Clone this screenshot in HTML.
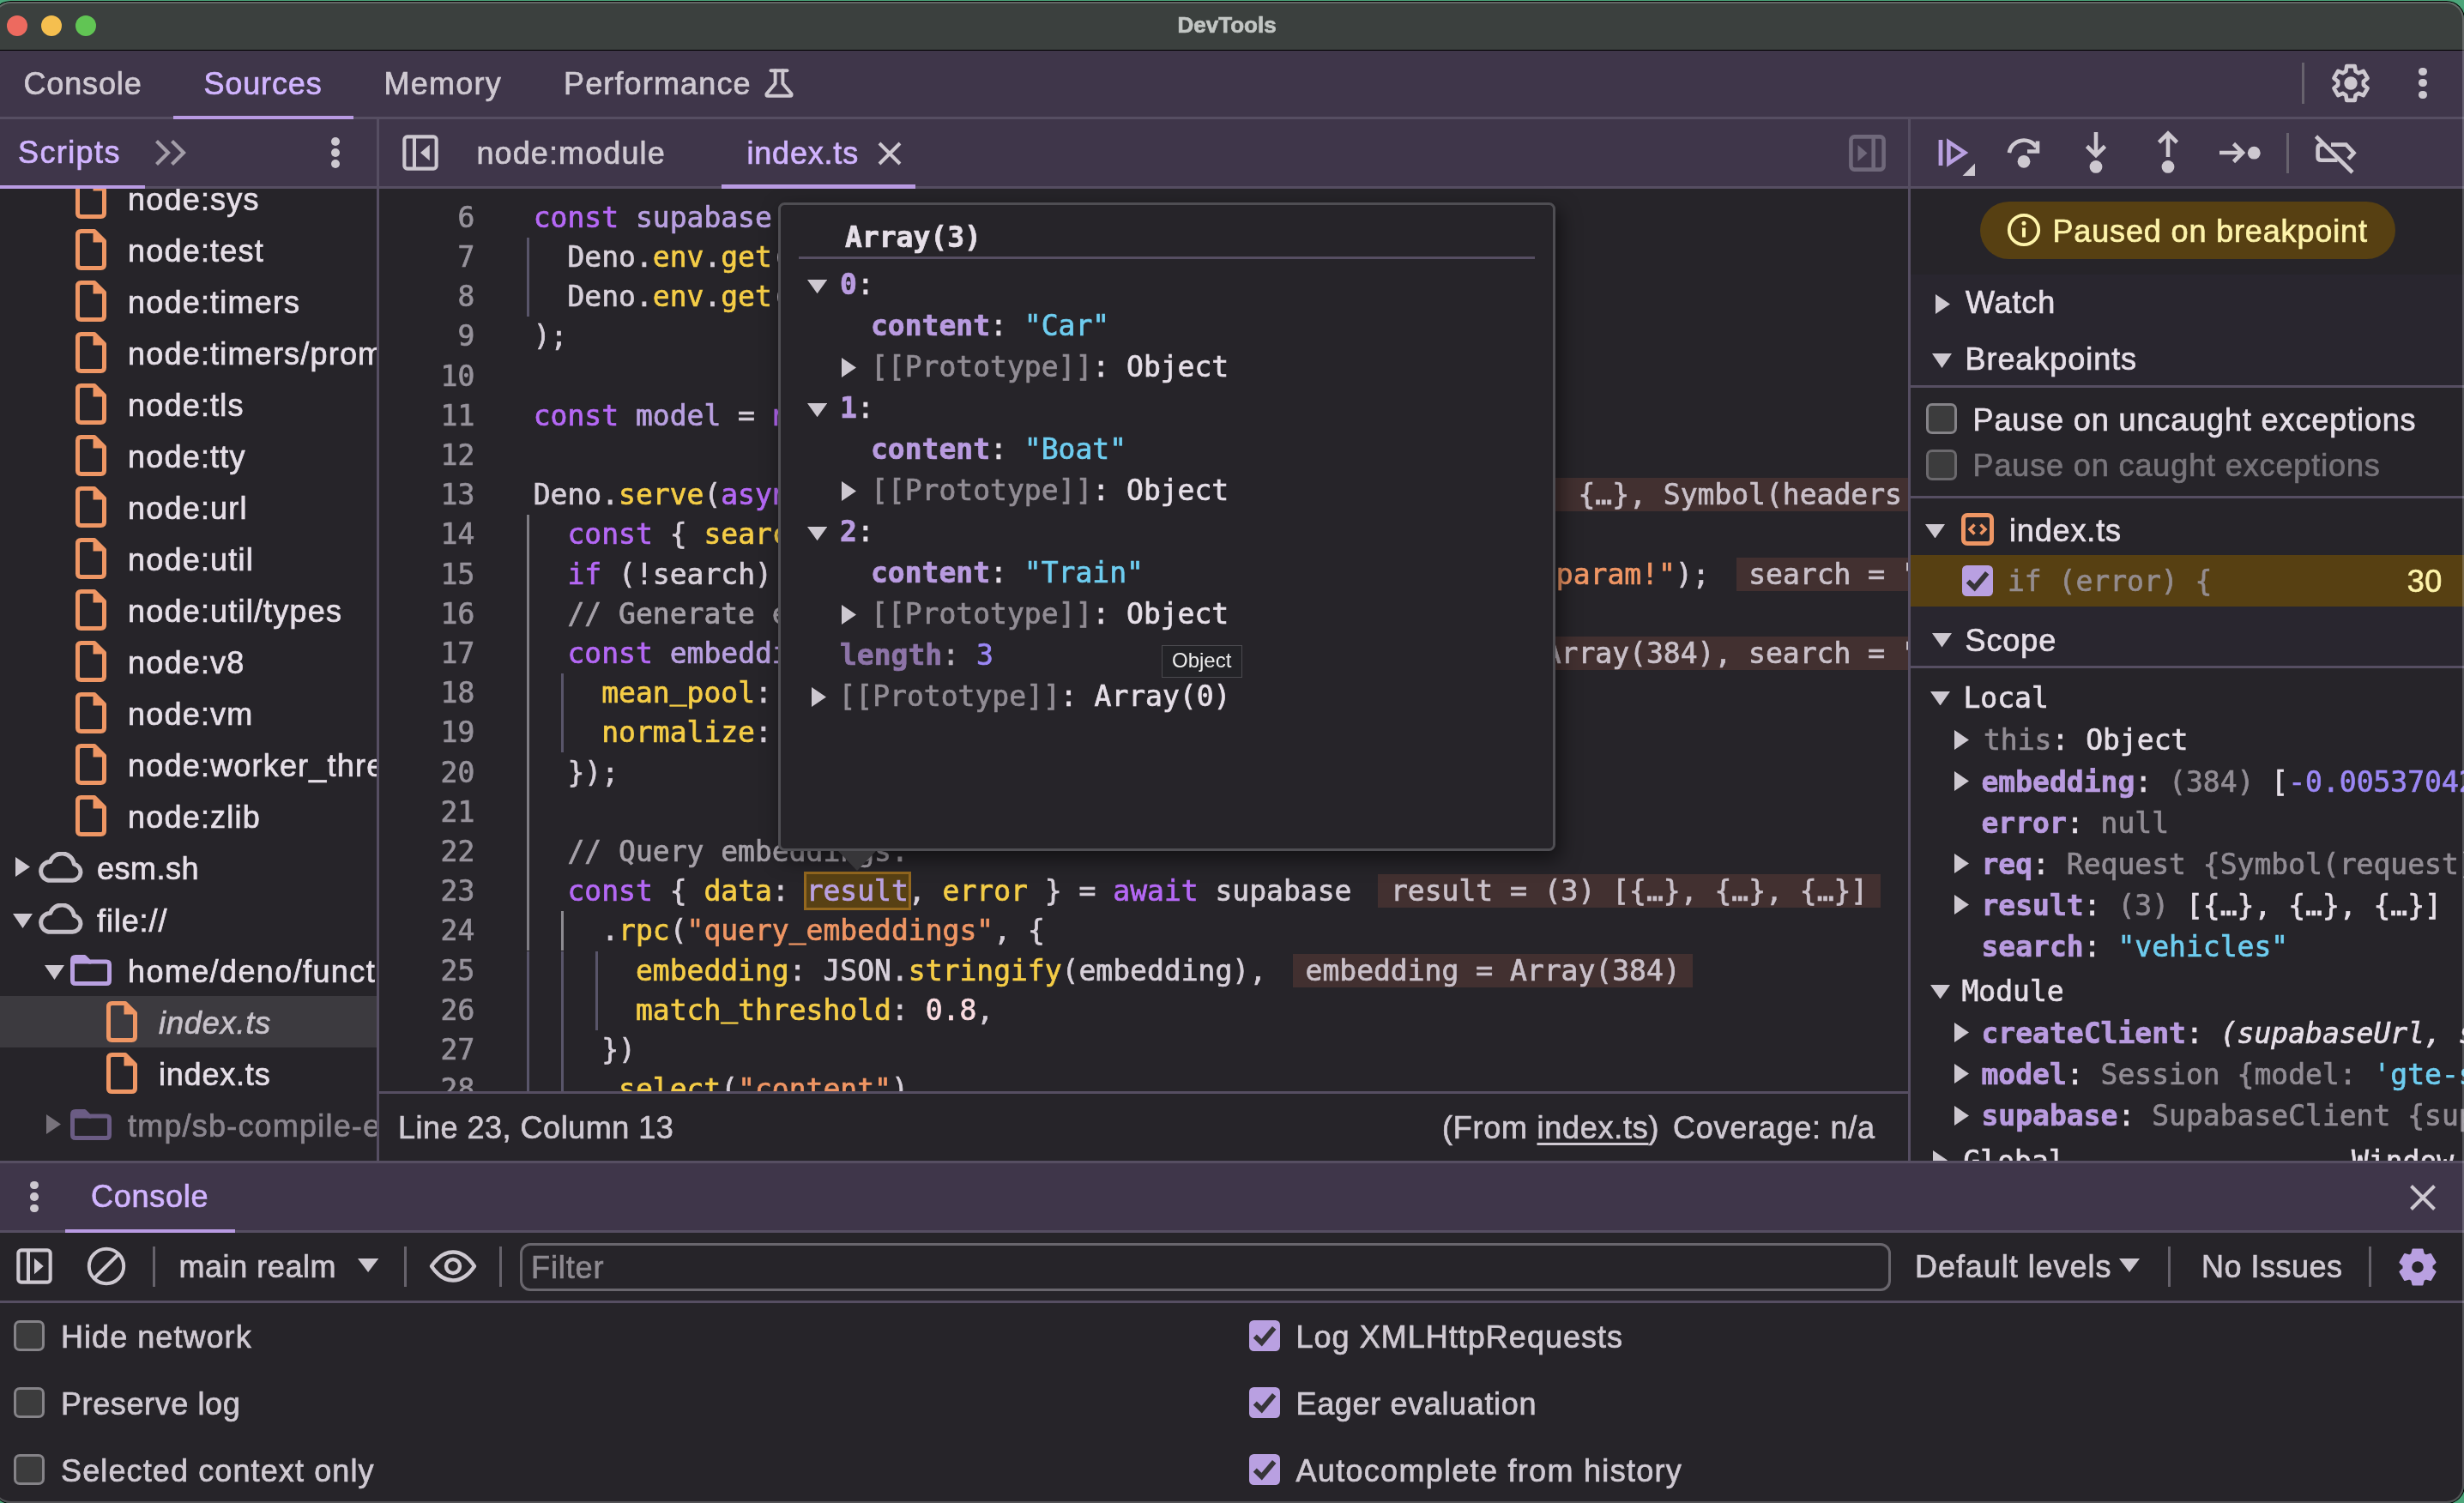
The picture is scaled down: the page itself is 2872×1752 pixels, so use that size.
<!DOCTYPE html>
<html lang="en"><head><meta charset="utf-8"><title>DevTools</title>
<style>
html,body{margin:0;padding:0;background:#3f8f6a;}
body{width:2872px;height:1752px;overflow:hidden;position:relative;}
#w{will-change:transform;position:absolute;left:0;top:0;width:2872px;height:1752px;overflow:hidden;background:#262429;}
.b{position:absolute;display:block;}
.s{position:absolute;font-family:"Liberation Sans", sans-serif;font-size:36px;line-height:48px;height:48px;letter-spacing:0.85px;white-space:pre;color:#e6dfe8;}
.m{position:absolute;font-family:"DejaVu Sans Mono", "Liberation Mono", monospace;font-size:33px;line-height:48px;height:48px;white-space:pre;color:#e6dfe8;}
.clip{position:absolute;overflow:hidden;}
.cl{position:absolute;left:0;font-family:"DejaVu Sans Mono", "Liberation Mono", monospace;font-size:33px;line-height:46.2px;height:46.2px;white-space:pre;color:#d7d0da;}
.k{color:#b568f5}.v{color:#b9a0e1}.p{color:#f5cd46}.t{color:#f09664}.c{color:#a5a0a8}.n{color:#fadce1}
.iv{background:#423030;color:#c9c0c9;margin-left:31px;padding:0 14.5px;}
.nm{color:#b99be0;font-weight:bold}.os{color:#6ecdf0}.dm{color:#918c94}.on{color:#9b87f5}
i{font-style:italic}.u{position:relative;top:-3.8px}
.s,.m,.cl{-webkit-text-stroke:0.7px}
</style></head><body><div id="w">
<div class="b" style="left:0.0px;top:0.0px;width:2872.0px;height:58.0px;background:#3b403e;"></div>
<div class="b" style="left:0.0px;top:57.8px;width:2872.0px;height:1.5px;background:#000;"></div>
<div class="b" style="left:8px;top:18px;width:24px;height:24px;border-radius:50%;background:#ed6a5f;"></div>
<div class="b" style="left:48px;top:18px;width:24px;height:24px;border-radius:50%;background:#f5bf4f;"></div>
<div class="b" style="left:88px;top:18px;width:24px;height:24px;border-radius:50%;background:#61c554;"></div>
<div class="s " style="left:1372.5px;top:4.9px;font-size:26px;letter-spacing:0px;color:#c2c6c4;font-weight:bold;">DevTools</div>
<div class="b" style="left:0.0px;top:59.3px;width:2872.0px;height:76.7px;background:#3f364a;"></div>
<div class="b" style="left:0.0px;top:136.0px;width:2872.0px;height:3.0px;background:#564e62;"></div>
<div class="s " style="left:27.5px;top:73.5px;color:#cfc9d2;">Console</div>
<div class="s " style="left:237.5px;top:73.5px;color:#d1b4ff;">Sources</div>
<div class="s " style="left:447.5px;top:73.5px;letter-spacing:1.25px;color:#cfc9d2;">Memory</div>
<div class="s " style="left:657.0px;top:73.5px;letter-spacing:1.15px;color:#cfc9d2;">Performance</div>
<div class="b" style="left:202.0px;top:134.5px;width:210.0px;height:4.5px;background:#b99be3;"></div>
<svg class="b" style="left:889.0px;top:78.0px;" width="38" height="38" viewBox="0 0 38 38"><g fill="none" stroke="#cdc8d0" stroke-width="3.9" stroke-linecap="round" stroke-linejoin="round"><path d="M9.5,4.3H28.5"/><path d="M14.6,4.3V19.5L4.6,31.2Q3.4,33.7 6.2,33.7H31.8Q34.6,33.7 33.4,31.2L23.4,19.5V4.3"/></g></svg>
<div class="b" style="left:2682.8px;top:73.0px;width:3.2px;height:48.0px;background:#67626d;"></div>
<svg class="b" style="left:2716.0px;top:73.0px;" width="48" height="48" viewBox="0 0 48 48"><path d="M29.62,10.09L28.76,4.16L19.24,4.16L18.38,10.09L14.77,12.18L9.20,9.96L4.44,18.21L9.15,21.91L9.15,26.09L4.44,29.79L9.20,38.04L14.77,35.82L18.38,37.91L19.24,43.84L28.76,43.84L29.62,37.91L33.23,35.82L38.80,38.04L43.56,29.79L38.85,26.09L38.85,21.91L43.56,18.21L38.80,9.96L33.23,12.18Z" fill="none" stroke="#cdc8d0" stroke-width="4.6" stroke-linejoin="round"/><circle cx="24" cy="24" r="7.7" fill="#cdc8d0"/></svg>
<div class="b" style="left:2819.3px;top:78.7px;width:9.4px;height:9.4px;border-radius:50%;background:#cdc8d0"></div>
<div class="b" style="left:2819.3px;top:92.1px;width:9.4px;height:9.4px;border-radius:50%;background:#cdc8d0"></div>
<div class="b" style="left:2819.3px;top:105.6px;width:9.4px;height:9.4px;border-radius:50%;background:#cdc8d0"></div>
<div class="b" style="left:0.0px;top:139.0px;width:2872.0px;height:78.0px;background:#3f364a;"></div>
<div class="b" style="left:0.0px;top:217.0px;width:2872.0px;height:3.0px;background:#564e62;"></div>
<div class="b" style="left:439.0px;top:139.0px;width:3.0px;height:1214.0px;background:#564e62;"></div>
<div class="b" style="left:2224.0px;top:139.0px;width:3.0px;height:1214.0px;background:#564e62;"></div>
<div class="s " style="left:21.0px;top:154.3px;letter-spacing:1.4px;color:#d1b4ff;">Scripts</div>
<div class="b" style="left:0.0px;top:215.5px;width:168.5px;height:4.5px;background:#b99be3;"></div>
<svg class="b" style="left:180.0px;top:162.0px;" width="38" height="32" viewBox="0 0 38 32"><g fill="none" stroke="#a39da8" stroke-width="4.2" stroke-linejoin="miter"><path d="M2.5,2.5L16,16L2.5,29.5"/><path d="M20.5,2.5L34,16L20.5,29.5"/></g></svg>
<div class="b" style="left:385.5px;top:160.0px;width:10px;height:10px;border-radius:50%;background:#cdc8d0"></div>
<div class="b" style="left:385.5px;top:173.0px;width:10px;height:10px;border-radius:50%;background:#cdc8d0"></div>
<div class="b" style="left:385.5px;top:186.0px;width:10px;height:10px;border-radius:50%;background:#cdc8d0"></div>
<svg class="b" style="left:468.5px;top:157.0px;" width="42" height="42" viewBox="0 0 43 43"><rect x="2.4" y="2.4" width="38.2" height="38.2" rx="3.5" fill="none" stroke="#cdc8d0" stroke-width="4.2"/><path d="M14.3,3V40" stroke="#cdc8d0" stroke-width="4.2"/><path d="M32.5,12V31L21.5,21.5Z" fill="#cdc8d0"/></svg>
<div class="s " style="left:555.5px;top:154.8px;letter-spacing:1.1px;color:#cfc9d2;">node:module</div>
<div class="s " style="left:870.5px;top:154.8px;letter-spacing:0.8px;color:#d1b4ff;">index.ts</div>
<svg class="b" style="left:1023.0px;top:165.0px;" width="28" height="28" viewBox="0 0 28 28"><path d="M2,2L26,26M26,2L2,26" stroke="#cdc8d0" stroke-width="4" fill="none"/></svg>
<div class="b" style="left:840.5px;top:214.5px;width:226.0px;height:5.5px;background:#b99be3;"></div>
<svg class="b" style="left:2155.0px;top:156.5px;" width="43" height="43" viewBox="0 0 43 43"><rect x="2.4" y="2.4" width="38.2" height="38.2" rx="4" fill="none" stroke="#6f687a" stroke-width="4.6"/><path d="M28.7,3V40" stroke="#6f687a" stroke-width="4.6"/><path d="M10.5,12V31L21.5,21.5Z" fill="#6f687a"/></svg>
<div class="clip" style="left:0;top:220px;width:439px;height:1132px;">
<svg class="b" style="left:88.0px;top:-13.1px;" width="36" height="48" viewBox="0 0 36 48"><path d="M2.5,6.5Q2.5,2.5 6.5,2.5H22L33.5,14V41.5Q33.5,45.5 29.5,45.5H6.5Q2.5,45.5 2.5,41.5Z" fill="none" stroke="#ee9664" stroke-width="5" stroke-linejoin="round"/><path d="M20.5,2.5L33.5,15.5H20.5Z" fill="#ee9664"/></svg>
<div class="s " style="left:149.0px;top:-10.7px;letter-spacing:1.2px;color:#e6dfe8;">node:sys</div>
<svg class="b" style="left:88.0px;top:46.9px;" width="36" height="48" viewBox="0 0 36 48"><path d="M2.5,6.5Q2.5,2.5 6.5,2.5H22L33.5,14V41.5Q33.5,45.5 29.5,45.5H6.5Q2.5,45.5 2.5,41.5Z" fill="none" stroke="#ee9664" stroke-width="5" stroke-linejoin="round"/><path d="M20.5,2.5L33.5,15.5H20.5Z" fill="#ee9664"/></svg>
<div class="s " style="left:149.0px;top:49.3px;letter-spacing:1.2px;color:#e6dfe8;">node:test</div>
<svg class="b" style="left:88.0px;top:106.9px;" width="36" height="48" viewBox="0 0 36 48"><path d="M2.5,6.5Q2.5,2.5 6.5,2.5H22L33.5,14V41.5Q33.5,45.5 29.5,45.5H6.5Q2.5,45.5 2.5,41.5Z" fill="none" stroke="#ee9664" stroke-width="5" stroke-linejoin="round"/><path d="M20.5,2.5L33.5,15.5H20.5Z" fill="#ee9664"/></svg>
<div class="s " style="left:149.0px;top:109.3px;letter-spacing:1.2px;color:#e6dfe8;">node:timers</div>
<svg class="b" style="left:88.0px;top:166.9px;" width="36" height="48" viewBox="0 0 36 48"><path d="M2.5,6.5Q2.5,2.5 6.5,2.5H22L33.5,14V41.5Q33.5,45.5 29.5,45.5H6.5Q2.5,45.5 2.5,41.5Z" fill="none" stroke="#ee9664" stroke-width="5" stroke-linejoin="round"/><path d="M20.5,2.5L33.5,15.5H20.5Z" fill="#ee9664"/></svg>
<div class="s " style="left:149.0px;top:169.3px;letter-spacing:1.2px;color:#e6dfe8;">node:timers/promises</div>
<svg class="b" style="left:88.0px;top:226.9px;" width="36" height="48" viewBox="0 0 36 48"><path d="M2.5,6.5Q2.5,2.5 6.5,2.5H22L33.5,14V41.5Q33.5,45.5 29.5,45.5H6.5Q2.5,45.5 2.5,41.5Z" fill="none" stroke="#ee9664" stroke-width="5" stroke-linejoin="round"/><path d="M20.5,2.5L33.5,15.5H20.5Z" fill="#ee9664"/></svg>
<div class="s " style="left:149.0px;top:229.3px;letter-spacing:1.2px;color:#e6dfe8;">node:tls</div>
<svg class="b" style="left:88.0px;top:286.9px;" width="36" height="48" viewBox="0 0 36 48"><path d="M2.5,6.5Q2.5,2.5 6.5,2.5H22L33.5,14V41.5Q33.5,45.5 29.5,45.5H6.5Q2.5,45.5 2.5,41.5Z" fill="none" stroke="#ee9664" stroke-width="5" stroke-linejoin="round"/><path d="M20.5,2.5L33.5,15.5H20.5Z" fill="#ee9664"/></svg>
<div class="s " style="left:149.0px;top:289.3px;letter-spacing:1.2px;color:#e6dfe8;">node:tty</div>
<svg class="b" style="left:88.0px;top:347.0px;" width="36" height="48" viewBox="0 0 36 48"><path d="M2.5,6.5Q2.5,2.5 6.5,2.5H22L33.5,14V41.5Q33.5,45.5 29.5,45.5H6.5Q2.5,45.5 2.5,41.5Z" fill="none" stroke="#ee9664" stroke-width="5" stroke-linejoin="round"/><path d="M20.5,2.5L33.5,15.5H20.5Z" fill="#ee9664"/></svg>
<div class="s " style="left:149.0px;top:349.3px;letter-spacing:1.2px;color:#e6dfe8;">node:url</div>
<svg class="b" style="left:88.0px;top:407.0px;" width="36" height="48" viewBox="0 0 36 48"><path d="M2.5,6.5Q2.5,2.5 6.5,2.5H22L33.5,14V41.5Q33.5,45.5 29.5,45.5H6.5Q2.5,45.5 2.5,41.5Z" fill="none" stroke="#ee9664" stroke-width="5" stroke-linejoin="round"/><path d="M20.5,2.5L33.5,15.5H20.5Z" fill="#ee9664"/></svg>
<div class="s " style="left:149.0px;top:409.3px;letter-spacing:1.2px;color:#e6dfe8;">node:util</div>
<svg class="b" style="left:88.0px;top:467.0px;" width="36" height="48" viewBox="0 0 36 48"><path d="M2.5,6.5Q2.5,2.5 6.5,2.5H22L33.5,14V41.5Q33.5,45.5 29.5,45.5H6.5Q2.5,45.5 2.5,41.5Z" fill="none" stroke="#ee9664" stroke-width="5" stroke-linejoin="round"/><path d="M20.5,2.5L33.5,15.5H20.5Z" fill="#ee9664"/></svg>
<div class="s " style="left:149.0px;top:469.3px;letter-spacing:1.2px;color:#e6dfe8;">node:util/types</div>
<svg class="b" style="left:88.0px;top:527.0px;" width="36" height="48" viewBox="0 0 36 48"><path d="M2.5,6.5Q2.5,2.5 6.5,2.5H22L33.5,14V41.5Q33.5,45.5 29.5,45.5H6.5Q2.5,45.5 2.5,41.5Z" fill="none" stroke="#ee9664" stroke-width="5" stroke-linejoin="round"/><path d="M20.5,2.5L33.5,15.5H20.5Z" fill="#ee9664"/></svg>
<div class="s " style="left:149.0px;top:529.3px;letter-spacing:1.2px;color:#e6dfe8;">node:v8</div>
<svg class="b" style="left:88.0px;top:587.0px;" width="36" height="48" viewBox="0 0 36 48"><path d="M2.5,6.5Q2.5,2.5 6.5,2.5H22L33.5,14V41.5Q33.5,45.5 29.5,45.5H6.5Q2.5,45.5 2.5,41.5Z" fill="none" stroke="#ee9664" stroke-width="5" stroke-linejoin="round"/><path d="M20.5,2.5L33.5,15.5H20.5Z" fill="#ee9664"/></svg>
<div class="s " style="left:149.0px;top:589.3px;letter-spacing:1.2px;color:#e6dfe8;">node:vm</div>
<svg class="b" style="left:88.0px;top:647.0px;" width="36" height="48" viewBox="0 0 36 48"><path d="M2.5,6.5Q2.5,2.5 6.5,2.5H22L33.5,14V41.5Q33.5,45.5 29.5,45.5H6.5Q2.5,45.5 2.5,41.5Z" fill="none" stroke="#ee9664" stroke-width="5" stroke-linejoin="round"/><path d="M20.5,2.5L33.5,15.5H20.5Z" fill="#ee9664"/></svg>
<div class="s " style="left:149.0px;top:649.3px;letter-spacing:1.2px;color:#e6dfe8;">node:worker_threads</div>
<svg class="b" style="left:88.0px;top:707.0px;" width="36" height="48" viewBox="0 0 36 48"><path d="M2.5,6.5Q2.5,2.5 6.5,2.5H22L33.5,14V41.5Q33.5,45.5 29.5,45.5H6.5Q2.5,45.5 2.5,41.5Z" fill="none" stroke="#ee9664" stroke-width="5" stroke-linejoin="round"/><path d="M20.5,2.5L33.5,15.5H20.5Z" fill="#ee9664"/></svg>
<div class="s " style="left:149.0px;top:709.3px;letter-spacing:1.2px;color:#e6dfe8;">node:zlib</div>
<svg class="b" style="left:18.3px;top:778.5px;" width="17.0" height="23.0" viewBox="0 0 17.0 23.0"><path d="M0,0V23.0L17.0,11.5Z" fill="#cdc8d0"/></svg>
<svg class="b" style="left:43.0px;top:773.0px;" width="54" height="36" viewBox="0 0 54 36"><path d="M13.5,33.2H41.5A9.6,9.6 0 0 0 43.3,14.2A14.3,14.3 0 0 0 15.6,11.6A10.9,10.9 0 0 0 13.5,33.2Z" fill="none" stroke="#c4bfc7" stroke-width="5" stroke-linejoin="round"/></svg>
<div class="s " style="left:113.0px;top:768.6px;letter-spacing:0.5px;color:#e6dfe8;">esm.sh</div>
<svg class="b" style="left:14.8px;top:844.5px;" width="23.0" height="17.0" viewBox="0 0 23.0 17.0"><path d="M0,0H23.0L11.5,17.0Z" fill="#cdc8d0"/></svg>
<svg class="b" style="left:43.0px;top:833.0px;" width="54" height="36" viewBox="0 0 54 36"><path d="M13.5,33.2H41.5A9.6,9.6 0 0 0 43.3,14.2A14.3,14.3 0 0 0 15.6,11.6A10.9,10.9 0 0 0 13.5,33.2Z" fill="none" stroke="#c4bfc7" stroke-width="5" stroke-linejoin="round"/></svg>
<div class="s " style="left:113.0px;top:829.5px;letter-spacing:0.9px;color:#e6dfe8;">file://</div>
<svg class="b" style="left:51.5px;top:904.5px;" width="23.0" height="17.0" viewBox="0 0 23.0 17.0"><path d="M0,0H23.0L11.5,17.0Z" fill="#cdc8d0"/></svg>
<svg class="b" style="left:82.0px;top:893.0px;" width="48" height="36" viewBox="0 0 48 36"><path d="M6,2.5H16.5L22,8H42Q45.5,8 45.5,11.5V30Q45.5,33.5 42,33.5H6Q2.5,33.5 2.5,30V6Q2.5,2.5 6,2.5Z" fill="none" stroke="#b9a0e1" stroke-width="5" stroke-linejoin="round"/><path d="M2.5,10.5V6Q2.5,2.5 6,2.5H16.5L22,8L24.5,10.5Z" fill="#b9a0e1"/></svg>
<div class="s " style="left:149.0px;top:889.0px;letter-spacing:1.39px;color:#e6dfe8;">home/deno/functions/query-embeddings</div>
<div class="b" style="left:0.0px;top:941.0px;width:439.0px;height:60.0px;background:#3c3a3f;"></div>
<svg class="b" style="left:124.0px;top:947.0px;" width="36" height="48" viewBox="0 0 36 48"><path d="M2.5,6.5Q2.5,2.5 6.5,2.5H22L33.5,14V41.5Q33.5,45.5 29.5,45.5H6.5Q2.5,45.5 2.5,41.5Z" fill="none" stroke="#ee9664" stroke-width="5" stroke-linejoin="round"/><path d="M20.5,2.5L33.5,15.5H20.5Z" fill="#ee9664"/></svg>
<div class="s " style="left:185.0px;top:948.8px;letter-spacing:0.9px;color:#c8c3cb;"><i>index.ts</i></div>
<svg class="b" style="left:124.0px;top:1007.0px;" width="36" height="48" viewBox="0 0 36 48"><path d="M2.5,6.5Q2.5,2.5 6.5,2.5H22L33.5,14V41.5Q33.5,45.5 29.5,45.5H6.5Q2.5,45.5 2.5,41.5Z" fill="none" stroke="#ee9664" stroke-width="5" stroke-linejoin="round"/><path d="M20.5,2.5L33.5,15.5H20.5Z" fill="#ee9664"/></svg>
<div class="s " style="left:185.0px;top:1008.8px;letter-spacing:0.8px;color:#e6dfe8;">index.ts</div>
<svg class="b" style="left:54.0px;top:1078.5px;" width="17" height="23.0" viewBox="0 0 17 23.0"><path d="M0,0V23.0L17.0,11.5Z" fill="#77727b"/></svg>
<svg class="b" style="left:82.0px;top:1073.0px;" width="48" height="36" viewBox="0 0 48 36"><path d="M6,2.5H16.5L22,8H42Q45.5,8 45.5,11.5V30Q45.5,33.5 42,33.5H6Q2.5,33.5 2.5,30V6Q2.5,2.5 6,2.5Z" fill="none" stroke="#6b5c84" stroke-width="5" stroke-linejoin="round"/><path d="M2.5,10.5V6Q2.5,2.5 6,2.5H16.5L22,8L24.5,10.5Z" fill="#6b5c84"/></svg>
<div class="s " style="left:149.0px;top:1068.5px;letter-spacing:1.2px;color:#8a858e;">tmp/sb-compile-edge-runtime</div>
</div>
<div class="clip" style="left:442px;top:220px;width:1782px;height:1052px;">
<div class="b" style="left:495.2px;top:796.0px;width:125.0px;height:45.0px;background:#584114;box-sizing:border-box;border:3px solid #94681f;"></div>
<div class="cl" style="top:10.7px;left:0;width:111.3px;text-align:right;color:#96929b">6</div>
<div class="cl" style="top:10.7px;left:179.7px;"><span class="k">const</span> <span class="v">supabase</span> = <span class="p">createClient</span>(</div>
<div class="cl" style="top:56.9px;left:0;width:111.3px;text-align:right;color:#96929b">7</div>
<div class="cl" style="top:56.9px;left:179.7px;">  Deno.<span class="p">env</span>.<span class="p">get</span>(<span class="t">"SUPABASE<span class="u">_</span>URL"</span>)!,</div>
<div class="cl" style="top:103.1px;left:0;width:111.3px;text-align:right;color:#96929b">8</div>
<div class="cl" style="top:103.1px;left:179.7px;">  Deno.<span class="p">env</span>.<span class="p">get</span>(<span class="t">"SUPABASE<span class="u">_</span>ANON<span class="u">_</span>KEY"</span>)!</div>
<div class="cl" style="top:149.3px;left:0;width:111.3px;text-align:right;color:#96929b">9</div>
<div class="cl" style="top:149.3px;left:179.7px;">);</div>
<div class="cl" style="top:195.5px;left:0;width:111.3px;text-align:right;color:#96929b">10</div>
<div class="cl" style="top:241.7px;left:0;width:111.3px;text-align:right;color:#96929b">11</div>
<div class="cl" style="top:241.7px;left:179.7px;"><span class="k">const</span> <span class="v">model</span> = <span class="k">new</span> Supabase.<span class="p">ai</span>.<span class="p">Session</span>(<span class="t">"gte-small"</span>);</div>
<div class="cl" style="top:287.9px;left:0;width:111.3px;text-align:right;color:#96929b">12</div>
<div class="cl" style="top:334.1px;left:0;width:111.3px;text-align:right;color:#96929b">13</div>
<div class="cl" style="top:334.1px;left:179.7px;">Deno.<span class="p">serve</span>(<span class="k">async</span> (<span class="v">req</span>) =&gt; {<span class="iv">req = Request {Symbol(request): {…}, Symbol(headers<span style="margin-left:5px">): Headers, Symbol(signal): AbortSignal}</span></span></div>
<div class="cl" style="top:380.3px;left:0;width:111.3px;text-align:right;color:#96929b">14</div>
<div class="cl" style="top:380.3px;left:179.7px;">  <span class="k">const</span> { <span class="p">search</span> } = <span class="k">await</span> req.<span class="p">json</span>();</div>
<div class="cl" style="top:426.5px;left:0;width:111.3px;text-align:right;color:#96929b">15</div>
<div class="cl" style="top:426.5px;left:179.7px;">  <span class="k">if</span> (!search) <span class="k">return</span> <span class="k">new</span> <span class="p">Response</span>(<span class="t">"Please provide a search param!"</span>);<span class="iv">search = "vehicles"</span></div>
<div class="cl" style="top:472.7px;left:0;width:111.3px;text-align:right;color:#96929b">16</div>
<div class="cl" style="top:472.7px;left:179.7px;">  <span class="c">// Generate embedding for search term.</span></div>
<div class="cl" style="top:518.9px;left:0;width:111.3px;text-align:right;color:#96929b">17</div>
<div class="cl" style="top:518.9px;left:179.7px;">  <span class="k">const</span> <span class="v">embedding</span> = <span class="k">await</span> model.<span class="p">run</span>(search, {<span class="iv">embedding = Array(384), search = "vehicles"</span></div>
<div class="cl" style="top:565.1px;left:0;width:111.3px;text-align:right;color:#96929b">18</div>
<div class="cl" style="top:565.1px;left:179.7px;">    <span class="p">mean<span class="u">_</span>pool</span>: <span class="n">true</span>,</div>
<div class="cl" style="top:611.3px;left:0;width:111.3px;text-align:right;color:#96929b">19</div>
<div class="cl" style="top:611.3px;left:179.7px;">    <span class="p">normalize</span>: <span class="n">true</span>,</div>
<div class="cl" style="top:657.5px;left:0;width:111.3px;text-align:right;color:#96929b">20</div>
<div class="cl" style="top:657.5px;left:179.7px;">  });</div>
<div class="cl" style="top:703.7px;left:0;width:111.3px;text-align:right;color:#96929b">21</div>
<div class="cl" style="top:749.9px;left:0;width:111.3px;text-align:right;color:#96929b">22</div>
<div class="cl" style="top:749.9px;left:179.7px;">  <span class="c">// Query embeddings.</span></div>
<div class="cl" style="top:796.1px;left:0;width:111.3px;text-align:right;color:#96929b">23</div>
<div class="cl" style="top:796.1px;left:179.7px;">  <span class="k">const</span> { <span class="p">data</span>: <span class="v">result</span>, <span class="p">error</span> } = <span class="k">await</span> supabase<span class="iv">result = (3) [{…}, {…}, {…}]</span></div>
<div class="cl" style="top:842.3px;left:0;width:111.3px;text-align:right;color:#96929b">24</div>
<div class="cl" style="top:842.3px;left:179.7px;">    .<span class="p">rpc</span>(<span class="t">"query<span class="u">_</span>embeddings"</span>, {</div>
<div class="cl" style="top:888.5px;left:0;width:111.3px;text-align:right;color:#96929b">25</div>
<div class="cl" style="top:888.5px;left:179.7px;">      <span class="p">embedding</span>: JSON.<span class="p">stringify</span>(embedding),<span class="iv">embedding = Array(384)</span></div>
<div class="cl" style="top:934.7px;left:0;width:111.3px;text-align:right;color:#96929b">26</div>
<div class="cl" style="top:934.7px;left:179.7px;">      <span class="p">match<span class="u">_</span>threshold</span>: <span class="n">0.8</span>,</div>
<div class="cl" style="top:980.9px;left:0;width:111.3px;text-align:right;color:#96929b">27</div>
<div class="cl" style="top:980.9px;left:179.7px;">    })</div>
<div class="cl" style="top:1027.1px;left:0;width:111.3px;text-align:right;color:#96929b">28</div>
<div class="cl" style="top:1027.1px;left:179.7px;">    .<span class="p">select</span>(<span class="t">"content"</span>)</div>
<div class="b" style="left:172.3px;top:56.9px;width:2.8px;height:92.4px;background:#59556a;"></div>
<div class="b" style="left:172.3px;top:380.3px;width:2.8px;height:508.2px;background:#7f7d84;"></div>
<div class="b" style="left:172.3px;top:888.5px;width:2.8px;height:184.8px;background:#59556a;"></div>
<div class="b" style="left:212.0px;top:565.1px;width:2.8px;height:92.4px;background:#59556a;"></div>
<div class="b" style="left:212.0px;top:842.3px;width:2.8px;height:46.2px;background:#8d8b91;"></div>
<div class="b" style="left:212.0px;top:888.5px;width:2.8px;height:184.8px;background:#59556a;"></div>
<div class="b" style="left:251.8px;top:888.5px;width:2.8px;height:92.4px;background:#59556a;"></div>
</div>
<div class="b" style="left:442.0px;top:1272.0px;width:1782.0px;height:3.0px;background:#564e62;"></div>
<div class="s " style="left:464.0px;top:1290.5px;letter-spacing:0.5px;color:#cfc9d2;">Line 23, Column 13</div>
<div class="s " style="left:1681.0px;top:1290.5px;letter-spacing:0.75px;color:#cfc9d2;">(From <span style="text-decoration:underline;text-decoration-thickness:2.5px;text-underline-offset:5px">index.ts</span>)</div>
<div class="s " style="left:1950.0px;top:1290.5px;letter-spacing:0.75px;color:#cfc9d2;">Coverage: n/a</div>
<div class="b" style="left:907px;top:235.6px;width:905.5px;height:756.4px;box-sizing:border-box;border:3px solid #4f4e53;border-radius:7.5px;background:#262429;box-shadow:5px 9px 22px 1px rgba(0,0,0,.5);"></div>
<svg class="b" style="left:976.5px;top:991.5px;" width="44" height="23" viewBox="0 0 44 23"><path d="M0,0H44L22,23Z" fill="#373639"/></svg>
<div class="m " style="left:985.0px;top:253.4px;color:#e6dfe8;font-weight:bold;">Array(3)</div>
<div class="b" style="left:930.7px;top:299.2px;width:858.5px;height:3.0px;background:#564e62;"></div>
<svg class="b" style="left:941.3px;top:326.2px;" width="23.2" height="16.2" viewBox="0 0 23.2 16.2"><path d="M0,0H23.2L11.6,16.2Z" fill="#cdc8d0"/></svg>
<div class="m " style="left:979.0px;top:307.6px;color:#e6dfe8;"><span class="nm">0</span>:</div>
<div class="m " style="left:1015.0px;top:355.6px;color:#e6dfe8;"><span class="nm">content</span>: <span class="os">"Car"</span></div>
<svg class="b" style="left:981.3px;top:416.5px;" width="17.0" height="23.0" viewBox="0 0 17.0 23.0"><path d="M0,0V23.0L17.0,11.5Z" fill="#cdc8d0"/></svg>
<div class="m " style="left:1015.0px;top:403.6px;color:#e6dfe8;"><span class="dm">[[Prototype]]</span>: Object</div>
<svg class="b" style="left:941.3px;top:470.2px;" width="23.2" height="16.2" viewBox="0 0 23.2 16.2"><path d="M0,0H23.2L11.6,16.2Z" fill="#cdc8d0"/></svg>
<div class="m " style="left:979.0px;top:451.6px;color:#e6dfe8;"><span class="nm">1</span>:</div>
<div class="m " style="left:1015.0px;top:499.6px;color:#e6dfe8;"><span class="nm">content</span>: <span class="os">"Boat"</span></div>
<svg class="b" style="left:981.3px;top:560.5px;" width="17.0" height="23.0" viewBox="0 0 17.0 23.0"><path d="M0,0V23.0L17.0,11.5Z" fill="#cdc8d0"/></svg>
<div class="m " style="left:1015.0px;top:547.6px;color:#e6dfe8;"><span class="dm">[[Prototype]]</span>: Object</div>
<svg class="b" style="left:941.3px;top:614.2px;" width="23.2" height="16.2" viewBox="0 0 23.2 16.2"><path d="M0,0H23.2L11.6,16.2Z" fill="#cdc8d0"/></svg>
<div class="m " style="left:979.0px;top:595.6px;color:#e6dfe8;"><span class="nm">2</span>:</div>
<div class="m " style="left:1015.0px;top:643.6px;color:#e6dfe8;"><span class="nm">content</span>: <span class="os">"Train"</span></div>
<svg class="b" style="left:981.3px;top:704.5px;" width="17.0" height="23.0" viewBox="0 0 17.0 23.0"><path d="M0,0V23.0L17.0,11.5Z" fill="#cdc8d0"/></svg>
<div class="m " style="left:1015.0px;top:691.6px;color:#e6dfe8;"><span class="dm">[[Prototype]]</span>: Object</div>
<div class="m " style="left:979.0px;top:739.6px;color:#e6dfe8;"><span style="color:#8d74a8;font-weight:bold">length</span><span style="color:#bdb6c0">:</span> <span class="on">3</span></div>
<svg class="b" style="left:945.5px;top:800.5px;" width="17.0" height="23.0" viewBox="0 0 17.0 23.0"><path d="M0,0V23.0L17.0,11.5Z" fill="#cdc8d0"/></svg>
<div class="m " style="left:977.5px;top:787.6px;color:#e6dfe8;"><span class="dm">[[Prototype]]</span>: Array(0)</div>
<div class="b" style="left:1354px;top:752px;width:94px;height:37.5px;box-sizing:border-box;border:1.5px solid #4b4a4f;background:#232327;"></div>
<div class="s " style="left:1366.0px;top:745.7px;font-size:24px;letter-spacing:0px;color:#ececec;-webkit-text-stroke:0;">Object</div>
<div class="clip" style="left:2227px;top:139px;width:645px;height:1214px;">
<svg class="b" style="left:29.0px;top:19.0px;" width="50" height="50" viewBox="0 0 50 50"><path d="M6,5V35" stroke="#b9a0e1" stroke-width="4.8" fill="none"/><path d="M15.4,7.6V32.4L34.2,20Z" fill="none" stroke="#b9a0e1" stroke-width="4.6" stroke-linejoin="miter"/><path d="M46,32.5V47H31.5Z" fill="#cdc8d0"/></svg>
<svg class="b" style="left:109.0px;top:19.0px;" width="46" height="42" viewBox="0 0 46 42"><path d="M5.9,20.2A17.3,17.3 0 0 1 37.6,13.6" fill="none" stroke="#cdc8d0" stroke-width="4.6"/><path d="M27,18.5H39V6.5" fill="none" stroke="#cdc8d0" stroke-width="4.6"/><circle cx="23" cy="30.3" r="7.4" fill="#cdc8d0"/></svg>
<svg class="b" style="left:198.0px;top:11.0px;" width="36" height="56" viewBox="0 0 36 56"><path d="M18,4V30M7.5,20.5L18,31L28.5,20.5" fill="none" stroke="#cdc8d0" stroke-width="4.6"/><circle cx="18" cy="44.4" r="7.4" fill="#cdc8d0"/></svg>
<svg class="b" style="left:281.7px;top:11.0px;" width="36" height="56" viewBox="0 0 36 56"><path d="M18,33V6M7.5,16L18,5.5L28.5,16" fill="none" stroke="#cdc8d0" stroke-width="4.6"/><circle cx="18" cy="44.4" r="7.4" fill="#cdc8d0"/></svg>
<svg class="b" style="left:357.0px;top:21.0px;" width="54" height="36" viewBox="0 0 54 36"><path d="M3,18H29M19.5,7.5L30,18L19.5,28.5" fill="none" stroke="#cdc8d0" stroke-width="4.6"/><circle cx="43.3" cy="18.2" r="7.4" fill="#cdc8d0"/></svg>
<div class="b" style="left:438.3px;top:15.5px;width:3.2px;height:47.0px;background:#67626d;"></div>
<svg class="b" style="left:467.0px;top:15.0px;" width="56" height="52" viewBox="0 0 56 52"><path d="M23,14.6H40.5L49.6,24.3L43.2,31.3" fill="none" stroke="#cdc8d0" stroke-width="4.6" stroke-linejoin="miter"/><path d="M13.5,14.6H12Q7.6,14.6 7.6,19V28.8Q7.6,32.8 11.6,32.8H30.5" fill="none" stroke="#cdc8d0" stroke-width="4.6"/><path d="M5.5,5L48,47" stroke="#cdc8d0" stroke-width="4.6" fill="none"/></svg>
<div class="b" style="left:81px;top:96px;width:483.5px;height:67px;border-radius:34px;background:#574012;"></div>
<svg class="b" style="left:112.0px;top:109.3px;" width="40" height="40" viewBox="0 0 40 40"><circle cx="20" cy="20" r="17.2" fill="none" stroke="#fdf3aa" stroke-width="3.8"/><circle cx="20" cy="12.3" r="2.5" fill="#fdf3aa"/><path d="M20,17.5V28.5" stroke="#fdf3aa" stroke-width="4"/></svg>
<div class="s " style="left:165.5px;top:106.8px;color:#fdf3aa;">Paused on breakpoint</div>
<div class="b" style="left:0.0px;top:180.5px;width:645.0px;height:130.0px;background:#29262f;"></div>
<svg class="b" style="left:29.3px;top:204.0px;" width="17.0" height="23" viewBox="0 0 17.0 23"><path d="M0,0V23.0L17.0,11.5Z" fill="#cdc8d0"/></svg>
<div class="s " style="left:64.0px;top:190.4px;letter-spacing:0.9px;color:#e6dfe8;">Watch</div>
<svg class="b" style="left:24.5px;top:272.5px;" width="23.0" height="17.0" viewBox="0 0 23.0 17.0"><path d="M0,0H23.0L11.5,17.0Z" fill="#cdc8d0"/></svg>
<div class="s " style="left:63.5px;top:256.3px;letter-spacing:0.95px;color:#e6dfe8;">Breakpoints</div>
<div class="b" style="left:0.0px;top:310.3px;width:645.0px;height:3.0px;background:#564e62;"></div>
<div class="b" style="left:18.0px;top:331.0px;width:36px;height:36px;box-sizing:border-box;border:3px solid #858388;border-radius:7px;background:#3c3c3d;"></div>
<div class="s " style="left:72.5px;top:326.5px;letter-spacing:0.88px;color:#e6dfe8;">Pause on uncaught exceptions</div>
<div class="b" style="left:18.0px;top:385.0px;width:36px;height:36px;box-sizing:border-box;border:3px solid #6b696d;border-radius:7px;background:#3c3c3d;"></div>
<div class="s " style="left:72.5px;top:380.2px;letter-spacing:0.88px;color:#78757b;">Pause on caught exceptions</div>
<div class="b" style="left:0.0px;top:439.0px;width:645.0px;height:3.0px;background:#564e62;"></div>
<svg class="b" style="left:17.0px;top:471.5px;" width="23" height="16.5" viewBox="0 0 23 16.5"><path d="M0,0H23.0L11.5,16.5Z" fill="#cdc8d0"/></svg>
<svg class="b" style="left:59.0px;top:459.0px;" width="38" height="38" viewBox="0 0 38 38"><rect x="2.5" y="2.5" width="33" height="33" rx="4.5" fill="none" stroke="#ee9664" stroke-width="5"/><path d="M15.5,13.5L10,19L15.5,24.5M22.5,13.5L28,19L22.5,24.5" fill="none" stroke="#ee9664" stroke-width="3.6"/></svg>
<div class="s " style="left:115.0px;top:455.8px;color:#e6dfe8;">index.ts</div>
<div class="b" style="left:0.0px;top:508.0px;width:645.0px;height:60.0px;background:#574012;"></div>
<svg class="b" style="left:60.0px;top:520.0px;" width="36" height="36" viewBox="0 0 36 36"><rect width="36" height="36" rx="5.5" fill="#b9a0e1"/><path d="M6.8,18.6L14.6,26.2L29.2,8.8" fill="none" stroke="#373539" stroke-width="5.8"/></svg>
<div class="m " style="left:113.0px;top:514.6px;color:#948c8e;">if (error) {</div>
<div class="s" style="left:473px;width:147px;text-align:right;top:515.0px;color:#fdf3aa;letter-spacing:0.6px">30</div>
<div class="b" style="left:0.0px;top:568.0px;width:645.0px;height:69.5px;background:#29262f;"></div>
<svg class="b" style="left:24.7px;top:599.0px;" width="23.0" height="16.5" viewBox="0 0 23.0 16.5"><path d="M0,0H23.0L11.5,16.5Z" fill="#cdc8d0"/></svg>
<div class="s " style="left:63.5px;top:583.5px;letter-spacing:0.9px;color:#e6dfe8;">Scope</div>
<div class="b" style="left:0.0px;top:637.3px;width:645.0px;height:3.0px;background:#564e62;"></div>
<svg class="b" style="left:22.7px;top:666.7px;" width="23.0" height="16.5" viewBox="0 0 23.0 16.5"><path d="M0,0H23.0L11.5,16.5Z" fill="#cdc8d0"/></svg>
<div class="m " style="left:61.5px;top:651.1px;color:#e6dfe8;">Local</div>
<svg class="b" style="left:50.5px;top:711.5px;" width="17.0" height="23.0" viewBox="0 0 17.0 23.0"><path d="M0,0V23.0L17.0,11.5Z" fill="#cdc8d0"/></svg>
<div class="m " style="left:85.0px;top:700.4px;color:#e6dfe8;"><span class="dm">this</span>: Object</div>
<svg class="b" style="left:50.5px;top:759.9px;" width="17.0" height="23.0" viewBox="0 0 17.0 23.0"><path d="M0,0V23.0L17.0,11.5Z" fill="#cdc8d0"/></svg>
<div class="m " style="left:82.5px;top:748.8px;color:#e6dfe8;"><span class="nm">embedding</span>: <span class="dm">(384)</span> [<span class="on">-0.005370425991714001</span>, <span class="on">-0.03</span>]</div>
<div class="m " style="left:82.5px;top:796.7px;color:#e6dfe8;"><span class="nm">error</span>: <span class="dm">null</span></div>
<svg class="b" style="left:50.5px;top:855.8px;" width="17.0" height="23.0" viewBox="0 0 17.0 23.0"><path d="M0,0V23.0L17.0,11.5Z" fill="#cdc8d0"/></svg>
<div class="m " style="left:82.5px;top:844.7px;color:#e6dfe8;"><span class="nm">req</span>: <span class="dm">Request {Symbol(request): {…}, Symbol(headers)</span></div>
<svg class="b" style="left:50.5px;top:903.8px;" width="17.0" height="23.0" viewBox="0 0 17.0 23.0"><path d="M0,0V23.0L17.0,11.5Z" fill="#cdc8d0"/></svg>
<div class="m " style="left:82.5px;top:892.7px;color:#e6dfe8;"><span class="nm">result</span>: <span class="dm">(3)</span> [{…}, {…}, {…}]</div>
<div class="m " style="left:82.5px;top:940.6px;color:#e6dfe8;"><span class="nm">search</span>: <span class="os">"vehicles"</span></div>
<svg class="b" style="left:22.7px;top:1008.5px;" width="23.0" height="16.5" viewBox="0 0 23.0 16.5"><path d="M0,0H23.0L11.5,16.5Z" fill="#cdc8d0"/></svg>
<div class="m " style="left:59.5px;top:992.9px;color:#e6dfe8;">Module</div>
<svg class="b" style="left:50.5px;top:1053.0px;" width="17.0" height="23.0" viewBox="0 0 17.0 23.0"><path d="M0,0V23.0L17.0,11.5Z" fill="#cdc8d0"/></svg>
<div class="m " style="left:82.5px;top:1041.9px;color:#e6dfe8;"><span class="nm">createClient</span>: <i>(supabaseUrl, supabaseKey, options) =&gt;</i></div>
<svg class="b" style="left:50.5px;top:1101.2px;" width="17.0" height="23.0" viewBox="0 0 17.0 23.0"><path d="M0,0V23.0L17.0,11.5Z" fill="#cdc8d0"/></svg>
<div class="m " style="left:82.5px;top:1090.1px;color:#e6dfe8;"><span class="nm">model</span>: <span class="dm">Session {model: </span><span class="os">'gte-small'</span><span class="dm">, init: Promise}</span></div>
<svg class="b" style="left:50.5px;top:1149.5px;" width="17.0" height="23.0" viewBox="0 0 17.0 23.0"><path d="M0,0V23.0L17.0,11.5Z" fill="#cdc8d0"/></svg>
<div class="m " style="left:82.5px;top:1138.4px;color:#e6dfe8;"><span class="nm">supabase</span>: <span class="dm">SupabaseClient {supabaseUrl: </span></div>
<svg class="b" style="left:25.5px;top:1201.7px;" width="17.0" height="23.0" viewBox="0 0 17.0 23.0"><path d="M0,0V23.0L17.0,11.5Z" fill="#cdc8d0"/></svg>
<div class="m " style="left:61.5px;top:1190.6px;color:#e6dfe8;">Global</div>
<div class="m " style="left:514.0px;top:1190.6px;color:#e6dfe8;">Window</div>
</div>
<div class="b" style="left:0.0px;top:1353.0px;width:2872.0px;height:3.0px;background:#564e62;"></div>
<div class="b" style="left:0.0px;top:1356.0px;width:2872.0px;height:78.0px;background:#3f364a;"></div>
<div class="b" style="left:0.0px;top:1434.0px;width:2872.0px;height:3.0px;background:#564e62;"></div>
<div class="b" style="left:35.3px;top:1377.0px;width:9.4px;height:9.4px;border-radius:50%;background:#cdc8d0"></div>
<div class="b" style="left:35.3px;top:1390.3px;width:9.4px;height:9.4px;border-radius:50%;background:#cdc8d0"></div>
<div class="b" style="left:35.3px;top:1403.6px;width:9.4px;height:9.4px;border-radius:50%;background:#cdc8d0"></div>
<div class="s " style="left:106.0px;top:1370.8px;letter-spacing:0.75px;color:#d1b4ff;">Console</div>
<div class="b" style="left:76.0px;top:1432.5px;width:197.5px;height:4.5px;background:#b99be3;"></div>
<svg class="b" style="left:2808.0px;top:1379.5px;" width="32" height="32" viewBox="0 0 32 32"><path d="M2.5,2.5L29.5,29.5M29.5,2.5L2.5,29.5" stroke="#cdc8d0" stroke-width="4" fill="none"/></svg>
<div class="b" style="left:0.0px;top:1515.5px;width:2872.0px;height:3.0px;background:#564e62;"></div>
<svg class="b" style="left:19.3px;top:1454.6px;" width="42" height="42" viewBox="0 0 43 43"><rect x="2.4" y="2.4" width="38.2" height="38.2" rx="3.5" fill="none" stroke="#cdc8d0" stroke-width="4.2"/><path d="M14.3,3V40" stroke="#cdc8d0" stroke-width="4.2"/><path d="M21.5,12V31L32.5,21.5Z" fill="#cdc8d0"/></svg>
<svg class="b" style="left:100.0px;top:1452.0px;" width="48" height="48" viewBox="0 0 48 48"><circle cx="24" cy="24" r="20.2" fill="none" stroke="#cdc8d0" stroke-width="4"/><path d="M10,38L38,10" stroke="#cdc8d0" stroke-width="4"/></svg>
<div class="b" style="left:178.0px;top:1452.5px;width:3.2px;height:47.0px;background:#66626b;"></div>
<div class="s " style="left:208.5px;top:1453.0px;letter-spacing:0.55px;color:#cfc9d2;">main realm</div>
<svg class="b" style="left:416.7px;top:1466.5px;" width="24.2" height="16.0" viewBox="0 0 24.2 16.0"><path d="M0,0H24.2L12.1,16.0Z" fill="#cdc8d0"/></svg>
<div class="b" style="left:470.5px;top:1452.5px;width:3.2px;height:47.0px;background:#66626b;"></div>
<svg class="b" style="left:500.0px;top:1456.0px;" width="56" height="40" viewBox="0 0 56 40"><path d="M3,20Q14,3.5 28,3.5Q42,3.5 53,20Q42,36.5 28,36.5Q14,36.5 3,20Z" fill="none" stroke="#cdc8d0" stroke-width="4.4" stroke-linejoin="round"/><circle cx="28" cy="20" r="8" fill="none" stroke="#cdc8d0" stroke-width="4.4"/></svg>
<div class="b" style="left:581.7px;top:1452.5px;width:3.2px;height:47.0px;background:#66626b;"></div>
<div class="b" style="left:605.5px;top:1448.5px;width:1598px;height:56px;box-sizing:border-box;border:3px solid #69666d;border-radius:12px;"></div>
<div class="s " style="left:619.0px;top:1453.5px;letter-spacing:0.9px;color:#8d8990;">Filter</div>
<div class="s " style="left:2232.0px;top:1453.0px;letter-spacing:0.95px;color:#cfc9d2;">Default levels</div>
<svg class="b" style="left:2470.0px;top:1466.5px;" width="24" height="16.0" viewBox="0 0 24 16.0"><path d="M0,0H24.0L12.0,16.0Z" fill="#cdc8d0"/></svg>
<div class="b" style="left:2527.0px;top:1452.5px;width:3.2px;height:47.0px;background:#66626b;"></div>
<div class="s " style="left:2566.0px;top:1453.0px;letter-spacing:0.5px;color:#cfc9d2;">No Issues</div>
<div class="b" style="left:2761.0px;top:1452.5px;width:3.2px;height:47.0px;background:#66626b;"></div>
<svg class="b" style="left:2794.0px;top:1452.5px;" width="48" height="48" viewBox="0 0 48 48"><path d="M30.75,8.84L29.51,3.43L18.49,3.43L17.25,8.84L14.24,10.57L8.94,8.94L3.43,18.49L7.49,22.26L7.49,25.74L3.43,29.51L8.94,39.06L14.24,37.43L17.25,39.16L18.49,44.57L29.51,44.57L30.75,39.16L33.76,37.43L39.06,39.06L44.57,29.51L40.51,25.74L40.51,22.26L44.57,18.49L39.06,8.94L33.76,10.57ZM24,16.2A7.8,7.8 0 1 0 24,31.8A7.8,7.8 0 1 0 24,16.2Z" fill="#b9a0e1" fill-rule="evenodd" stroke="#b9a0e1" stroke-width="2" stroke-linejoin="round"/></svg>
<div class="b" style="left:16.0px;top:1539.0px;width:36px;height:36px;box-sizing:border-box;border:3px solid #858388;border-radius:7px;background:#3c3c3d;"></div>
<div class="s " style="left:71.0px;top:1534.5px;letter-spacing:1.05px;color:#cfc9d2;">Hide network</div>
<div class="b" style="left:16.0px;top:1617.0px;width:36px;height:36px;box-sizing:border-box;border:3px solid #858388;border-radius:7px;background:#3c3c3d;"></div>
<div class="s " style="left:71.0px;top:1612.5px;letter-spacing:0.6px;color:#cfc9d2;">Preserve log</div>
<div class="b" style="left:16.0px;top:1695.0px;width:36px;height:36px;box-sizing:border-box;border:3px solid #858388;border-radius:7px;background:#3c3c3d;"></div>
<div class="s " style="left:71.0px;top:1690.5px;letter-spacing:1.12px;color:#cfc9d2;">Selected context only</div>
<svg class="b" style="left:1456.0px;top:1538.8px;" width="36" height="36" viewBox="0 0 36 36"><rect width="36" height="36" rx="5.5" fill="#b9a0e1"/><path d="M6.8,18.6L14.6,26.2L29.2,8.8" fill="none" stroke="#373539" stroke-width="5.8"/></svg>
<div class="s " style="left:1510.5px;top:1534.5px;letter-spacing:1.02px;color:#cfc9d2;">Log XMLHttpRequests</div>
<svg class="b" style="left:1456.0px;top:1616.8px;" width="36" height="36" viewBox="0 0 36 36"><rect width="36" height="36" rx="5.5" fill="#b9a0e1"/><path d="M6.8,18.6L14.6,26.2L29.2,8.8" fill="none" stroke="#373539" stroke-width="5.8"/></svg>
<div class="s " style="left:1510.5px;top:1612.5px;letter-spacing:0.65px;color:#cfc9d2;">Eager evaluation</div>
<svg class="b" style="left:1456.0px;top:1694.8px;" width="36" height="36" viewBox="0 0 36 36"><rect width="36" height="36" rx="5.5" fill="#b9a0e1"/><path d="M6.8,18.6L14.6,26.2L29.2,8.8" fill="none" stroke="#373539" stroke-width="5.8"/></svg>
<div class="s " style="left:1510.5px;top:1690.5px;letter-spacing:1.3px;color:#cfc9d2;">Autocomplete from history</div>
<div class="b" style="left:-8px;top:2px;width:2880.4px;height:1750px;border-radius:20.5px;box-shadow:inset 0 0 0 2px rgba(255,255,255,.21), 0 0 0 1.1px #000, 0 0 0 60px #4ba67a;pointer-events:none;"></div>
</div></body></html>
